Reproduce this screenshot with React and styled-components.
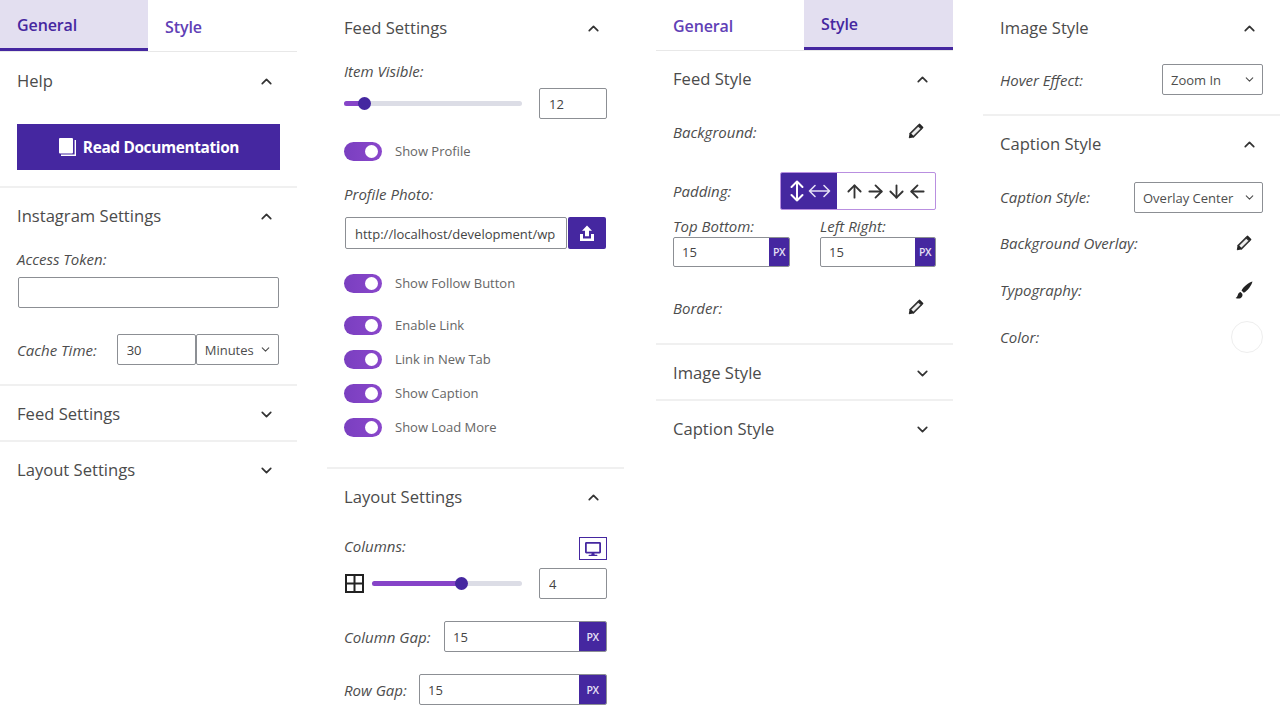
import styled, { createGlobalStyle } from "styled-components";
import {
  ArrowDown,
  ArrowLeft,
  ArrowRight,
  ArrowUp,
  ChevronDown,
  ChevronUp,
} from "lucide-react";
import { FaDesktop } from "react-icons/fa";

const purple = "#4527a0";
const FONT = `"Open Sans", "Noto Sans", "Liberation Sans", sans-serif`;

const GlobalStyle = createGlobalStyle`
  html, body { margin: 0; padding: 0; background: #fff; }
  body { font-family: ${FONT}; color: #444; overflow: hidden; }
  * { box-sizing: border-box; }
`;

const Page = styled.div`
  display: grid;
  grid-template-columns: 327px 329px 327px 297px;
  width: 1280px;
  height: 720px;
  overflow: hidden;
`;

const Panel = styled.div`
  width: 297px;
`;

const TabBar = styled.div`
  display: flex;
  height: ${(p) => p.$h}px;
  border-bottom: 1px solid #e8e8e8;
`;

const Tab = styled.div`
  flex: 1;
  padding: ${(p) => p.$top || 0}px 0 0 17px;
  display: flex;
  align-items: center;
  font-size: 16px;
  font-weight: 600;
  letter-spacing: -0.1px;
  color: ${(p) => (p.$active ? purple : "#5f40b6")};
  background: ${(p) => (p.$active ? "#e3dff0" : "#fff")};
  border-bottom: ${(p) => (p.$active ? `3px solid ${purple}` : "none")};

  &:first-child {
    flex: 0 0 148px;
  }
`;

const Section = styled.section`
  border-bottom: ${(p) => (p.$last ? "none" : "2px solid #f0f0f0")};
`;

const Header = styled.div`
  height: ${(p) => p.$h || 56}px;
  padding: ${(p) => p.$top || 0}px 22px 0 17px;
  display: flex;
  align-items: center;
  justify-content: space-between;
`;

const Title = styled.h3`
  margin: -2px 0 0;
  font-size: 16.6px;
  font-weight: 400;
  color: #4b4b4b;
`;

const Body = styled.div`
  padding: 0 17px ${(p) => p.$pb || 0}px;
`;

const DocButton = styled.button`
  display: flex;
  align-items: center;
  justify-content: center;
  gap: 6px;
  width: 263px;
  height: 46px;
  margin-top: 14px;
  border: 0;
  background: ${purple};
  color: #fff;
  font-family: ${FONT};
  font-size: 15.4px;
  font-weight: 700;
  letter-spacing: -0.35px;
`;

const Label = styled.label`
  display: block;
  height: 20px;
  font-size: 15px;
  font-style: italic;
  line-height: ${(p) => (p.$low ? 20 : 18)}px;
  white-space: nowrap;
  color: #4d4d4d;
  margin-top: ${(p) => p.$mt || 0}px;
`;

const Row = styled.div`
  display: flex;
  align-items: center;
  justify-content: ${(p) => (p.$spread ? "space-between" : "flex-start")};
  height: ${(p) => p.$h || 31}px;
  margin-top: ${(p) => p.$mt || 0}px;
`;

const TextBox = styled.input`
  display: block;
  width: ${(p) => p.$w}px;
  height: ${(p) => p.$h || 31}px;
  margin: ${(p) => p.$mt || 0}px 0 0 ${(p) => (p.$push ? "auto" : `${p.$ml || 0}px`)};
  padding: 1px 0 0 9px;
  border: 1px solid #8c8f94;
  border-radius: 2px;
  background: #fff;
  color: #444;
  font-family: ${FONT};
  font-size: 13px;
  outline: none;
`;

const SelectBox = styled.div`
  display: flex;
  align-items: center;
  justify-content: space-between;
  width: ${(p) => p.$w}px;
  height: 31px;
  margin-left: ${(p) => (p.$flush ? "0" : "auto")};
  padding: 0 6px 0 8px;
  border: 1px solid #8c8f94;
  border-radius: 2px;
  color: #4d4d4d;
  font-size: 13px;
  white-space: nowrap;
  overflow: hidden;
`;

const UnitField = styled.div`
  display: flex;
  width: ${(p) => p.$w}px;
  height: ${(p) => p.$h || 31}px;
  margin-left: auto;
  border: 1px solid #8c8f94;
  border-radius: 2px;
  overflow: hidden;
`;

const UnitValue = styled.div`
  flex: 1;
  display: flex;
  align-items: center;
  padding: 0 0 0 8px;
  font-size: 13px;
  color: #444;
`;

const UnitTag = styled.div`
  width: ${(p) => p.$w || 27}px;
  display: flex;
  align-items: center;
  justify-content: center;
  background: ${purple};
  color: #e5e0f5;
  font-size: 10.5px;
  font-weight: 600;
  letter-spacing: -0.4px;
`;

const SliderTrack = styled.div`
  position: relative;
  width: ${(p) => p.$w}px;
  height: 5px;
  border-radius: 3px;
  background: #dcdde6;
`;

const SliderFill = styled.div`
  height: 100%;
  border-radius: 3px;
  background: #8644c8;
`;

const SliderThumb = styled.div`
  position: absolute;
  top: -4px;
  width: 13px;
  height: 13px;
  margin-left: -7px;
  border-radius: 50%;
  background: ${purple};
`;

const ToggleLine = styled.div`
  display: flex;
  align-items: center;
  gap: 13px;
  height: 19px;
  margin-top: ${(p) => p.$mt || 0}px;
  font-size: 13px;
  color: #666;
`;

const ToggleText = styled.span`
  margin-top: -2px;
`;

const ToggleTrack = styled.span`
  display: flex;
  align-items: center;
  justify-content: flex-end;
  width: 38px;
  height: 19px;
  padding-right: 4px;
  border-radius: 10px;
  background: linear-gradient(90deg, #7a3fc0, #8a47cb);
`;

const ToggleKnob = styled.span`
  width: 13px;
  height: 13px;
  border-radius: 50%;
  background: #fff;
`;

const UploadBtn = styled.button`
  display: flex;
  align-items: center;
  justify-content: center;
  width: 38px;
  height: 32px;
  margin-left: 1px;
  padding: 0;
  border: 0;
  border-radius: 2px;
  background: ${purple};
`;

const DeviceBtn = styled.button`
  display: flex;
  align-items: center;
  justify-content: center;
  width: 28px;
  height: 23px;
  padding: 0;
  border: 1px solid ${purple};
  background: #fff;
  color: ${purple};
`;

const GridIcon = styled.svg`
  display: block;
  flex: none;
  margin: 0 8px 0 1px;
`;

const IconSlot = styled.span`
  display: flex;
  margin: -2px ${(p) => p.$mr || 0}px 0 0;
`;

const PaddingToggle = styled.div`
  display: flex;
  width: 156px;
  height: 38px;
  margin-left: auto;
  border: 1px solid #b98fe0;
  border-radius: 2px;
  overflow: hidden;
`;

const PaddingActive = styled.div`
  display: flex;
  align-items: center;
  justify-content: center;
  gap: 4px;
  width: 56px;
  padding-left: 2px;
  background: ${purple};
`;

const PaddingSides = styled.div`
  flex: 1;
  display: flex;
  align-items: center;
  justify-content: center;
  color: #333;
`;

const ArrowCell = styled.span`
  display: flex;
  justify-content: center;
  width: 21px;
`;

const TwoCols = styled.div`
  display: grid;
  grid-template-columns: 117px 116px;
  justify-content: space-between;
  margin-top: ${(p) => p.$mt || 0}px;
`;

const ColorDot = styled.span`
  width: 32px;
  height: 32px;
  border: 1px solid #eee;
  border-radius: 50%;
  background: #fff;
`;

const Opened = ({ title, h }) => (
  <Header $h={h}>
    <Title>{title}</Title>
    <ChevronUp size={17} strokeWidth={2.4} color="#333" />
  </Header>
);

const Closed = ({ title, last }) => (
  <Section $last={last}>
    <Header $h={54} $top={2}>
      <Title>{title}</Title>
      <ChevronDown size={17} strokeWidth={2.4} color="#333" />
    </Header>
  </Section>
);

const Toggle = ({ label, mt }) => (
  <ToggleLine $mt={mt}>
    <ToggleTrack>
      <ToggleKnob />
    </ToggleTrack>
    <ToggleText>{label}</ToggleText>
  </ToggleLine>
);

const Slider = ({ width, value }) => (
  <SliderTrack $w={width}>
    <SliderFill style={{ width: value }} />
    <SliderThumb style={{ left: value }} />
  </SliderTrack>
);

const BookIcon = () => (
  <svg width="19" height="20" viewBox="0 0 19 20">
    <path d="M2 1h12a1 1 0 0 1 1 1v13.5a1 1 0 0 1-1 1H2a1 1 0 0 1-1-1V2a1 1 0 0 1 1-1z" fill="#fff" />
    <path d="M17.3 3v15.2H3" fill="none" stroke="#fff" strokeWidth="1.4" />
  </svg>
);

const PencilIcon = () => (
  <svg width="16" height="16" viewBox="0 0 15 15">
    <path d="M10.8 1.2l3 3-1.2 1.2-3-3z" fill="#222" stroke="#222" strokeWidth="1.2" strokeLinejoin="round" />
    <path d="M9.6 2.4l3 3-7.6 7.6-3-3z" fill="#eee" stroke="#333" strokeWidth="1.5" strokeLinejoin="round" />
    <path d="M2 10l3 3-3.8.9z" fill="#222" stroke="#222" strokeWidth="0.9" strokeLinejoin="round" />
  </svg>
);

const BrushIcon = () => (
  <svg width="18" height="19" viewBox="0 0 18 19" fill="#222">
    <path d="M17.5.5C13.5 1.5 8.5 5.5 6.5 9.5L8.8 11.8c3.7-2 7.7-7.3 8.7-11.3z" />
    <path d="M5.6 11C3.8 11.3 3 13 2.6 14.6c-.3 1.2-1 1.9-2 2.3 2.2 1.2 5.3.8 6.4-1.2.6-1.1.6-2.2.2-3z" />
  </svg>
);

const UploadIcon = () => (
  <svg width="16" height="17" viewBox="0 0 16 17" fill="#fff">
    <path d="M8 .5l5 5.2H10v5.6H6V5.7H3z" />
    <path d="M1 9h3v4.5h8V9h3v7H1z" />
  </svg>
);

const UpDownIcon = () => (
  <svg width="14" height="24" viewBox="0 0 14 24" fill="none" stroke="#fff" strokeWidth="2" strokeLinecap="round" strokeLinejoin="round">
    <path d="M7 2.5v19M1.5 8L7 2.5 12.5 8M1.5 16L7 21.5 12.5 16" />
  </svg>
);

const LeftRightIcon = () => (
  <svg width="23" height="14" viewBox="0 0 23 14" fill="none" stroke="#e5e0f5" strokeWidth="1.6" strokeLinecap="round" strokeLinejoin="round">
    <path d="M1.5 7h20M7 1.5L1.5 7 7 12.5M16 1.5L21.5 7 16 12.5" />
  </svg>
);

const SideArrow = ({ icon: Icon }) => (
  <ArrowCell>
    <Icon size={25} strokeWidth={2.1} />
  </ArrowCell>
);

const App = () => (
  <Page>
    <GlobalStyle />

    <Panel>
      <TabBar $h={52}>
        <Tab $active $top={1}>General</Tab>
        <Tab $top={3}>Style</Tab>
      </TabBar>
      <Section>
        <Opened title="Help" h={58} />
        <Body $pb={16}>
          <DocButton>
            <BookIcon />
            Read Documentation
          </DocButton>
        </Body>
      </Section>
      <Section>
        <Opened title="Instagram Settings" />
        <Body $pb={19}>
          <Label $mt={6}>Access Token:</Label>
          <TextBox $w={261} $ml={1} $mt={7} />
          <Row $mt={26}>
            <Label $low>Cache Time:</Label>
            <TextBox $w={79} $ml={20} defaultValue="30" />
            <SelectBox $w={83} $flush>
              Minutes
              <ChevronDown size={13} strokeWidth={2} />
            </SelectBox>
          </Row>
        </Body>
      </Section>
      <Closed title="Feed Settings" />
      <Closed title="Layout Settings" last />
    </Panel>

    <Panel>
      <Section>
        <Opened title="Feed Settings" />
        <Body $pb={30}>
          <Label $mt={6}>Item Visible:</Label>
          <Row $mt={6}>
            <Slider width={178} value={21} />
            <TextBox $w={68} $push defaultValue="12" />
          </Row>
          <Toggle label="Show Profile" mt={23} />
          <Label $mt={24}>Profile Photo:</Label>
          <Row $mt={12} $h={32}>
            <TextBox $w={222} $ml={1} $h={32} defaultValue="http://localhost/development/wp" />
            <UploadBtn>
              <UploadIcon />
            </UploadBtn>
          </Row>
          <Toggle label="Show Follow Button" mt={25} />
          <Toggle label="Enable Link" mt={23} />
          <Toggle label="Link in New Tab" mt={15} />
          <Toggle label="Show Caption" mt={15} />
          <Toggle label="Show Load More" mt={15} />
        </Body>
      </Section>
      <Section $last>
        <Opened title="Layout Settings" />
        <Body>
          <Row $mt={12} $h={23} $spread>
            <Label $mt={-4}>Columns:</Label>
            <DeviceBtn>
              <FaDesktop size={16} />
            </DeviceBtn>
          </Row>
          <Row $mt={8}>
            <GridIcon width="19" height="19" viewBox="0 0 19 19" fill="none" stroke="#222" strokeWidth="2">
              <path d="M1 1h17v17H1zM9.5 1v17M1 9.5h17" />
            </GridIcon>
            <Slider width={150} value={90} />
            <TextBox $w={68} $push defaultValue="4" />
          </Row>
          <Row $mt={22}>
            <Label $low>Column Gap:</Label>
            <UnitField $w={163}>
              <UnitValue>15</UnitValue>
              <UnitTag>PX</UnitTag>
            </UnitField>
          </Row>
          <Row $mt={22}>
            <Label $low>Row Gap:</Label>
            <UnitField $w={188}>
              <UnitValue>15</UnitValue>
              <UnitTag>PX</UnitTag>
            </UnitField>
          </Row>
        </Body>
      </Section>
    </Panel>

    <Panel>
      <TabBar $h={51}>
        <Tab $top={2}>General</Tab>
        <Tab $active>Style</Tab>
      </TabBar>
      <Section>
        <Opened title="Feed Style" />
        <Body $pb={23}>
          <Row $mt={13} $h={24} $spread>
            <Label $low>Background:</Label>
            <IconSlot $mr={12}>
              <PencilIcon />
            </IconSlot>
          </Row>
          <Row $mt={28} $h={38}>
            <Label $low>Padding:</Label>
            <PaddingToggle>
              <PaddingActive>
                <UpDownIcon />
                <LeftRightIcon />
              </PaddingActive>
              <PaddingSides>
                <SideArrow icon={ArrowUp} />
                <SideArrow icon={ArrowRight} />
                <SideArrow icon={ArrowDown} />
                <SideArrow icon={ArrowLeft} />
              </PaddingSides>
            </PaddingToggle>
          </Row>
          <TwoCols $mt={7}>
            <div>
              <Label>Top Bottom:</Label>
              <UnitField $w={117} $h={30}>
                <UnitValue>15</UnitValue>
                <UnitTag $w={20}>PX</UnitTag>
              </UnitField>
            </div>
            <div>
              <Label>Left Right:</Label>
              <UnitField $w={116} $h={30}>
                <UnitValue>15</UnitValue>
                <UnitTag $w={20}>PX</UnitTag>
              </UnitField>
            </div>
          </TwoCols>
          <Row $mt={29} $h={24} $spread>
            <Label $low>Border:</Label>
            <IconSlot $mr={12}>
              <PencilIcon />
            </IconSlot>
          </Row>
        </Body>
      </Section>
      <Closed title="Image Style" />
      <Closed title="Caption Style" last />
    </Panel>

    <Panel>
      <Section>
        <Opened title="Image Style" />
        <Body $pb={19}>
          <Row $mt={8}>
            <Label $low>Hover Effect:</Label>
            <SelectBox $w={101}>
              Zoom In
              <ChevronDown size={13} strokeWidth={2} />
            </SelectBox>
          </Row>
        </Body>
      </Section>
      <Section $last>
        <Opened title="Caption Style" />
        <Body>
          <Row $mt={10}>
            <Label>Caption Style:</Label>
            <SelectBox $w={129}>
              Overlay Center
              <ChevronDown size={13} strokeWidth={2} />
            </SelectBox>
          </Row>
          <Row $mt={19} $h={24} $spread>
            <Label>Background Overlay:</Label>
            <IconSlot $mr={11}>
              <PencilIcon />
            </IconSlot>
          </Row>
          <Row $mt={23} $h={24} $spread>
            <Label>Typography:</Label>
            <IconSlot $mr={10}>
              <BrushIcon />
            </IconSlot>
          </Row>
          <Row $mt={18} $h={32} $spread>
            <Label $low>Color:</Label>
            <ColorDot />
          </Row>
        </Body>
      </Section>
    </Panel>
  </Page>
);

export default App;
